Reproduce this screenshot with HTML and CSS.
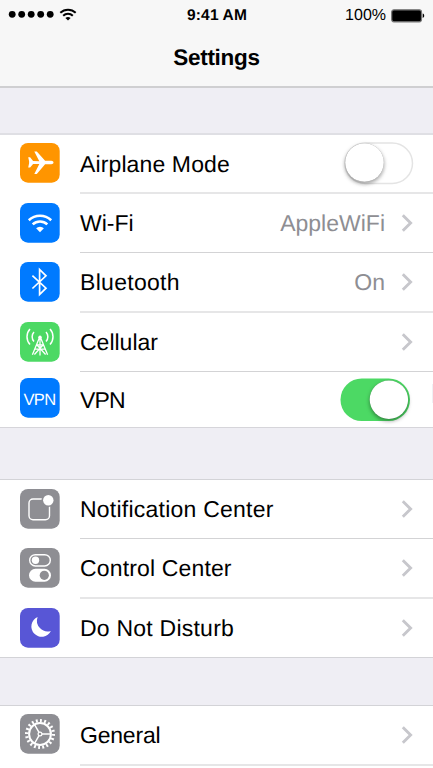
FILE: index.html
```html
<!DOCTYPE html>
<html lang="en">
<head>
<meta charset="utf-8">
<title>Settings</title>
<link rel="stylesheet" href="styles.css">
</head>
<body>
<svg class="defs" width="0" height="0">
  <symbol id="chevron" viewBox="0 0 12 18"><path d="M1.800 1.300 9.600 9 1.800 16.700" fill="none" stroke="#c7c7cc" stroke-width="2.900"/></symbol>
</svg>
<div class="screen">
  <header class="header">
    <div class="status">
      <svg class="signal" width="70" height="18" viewBox="0 0 70 18">
        <circle cx="4.200" cy="8.300" r="3.400"/><circle cx="13.700" cy="8.300" r="3.400"/><circle cx="23.200" cy="8.300" r="3.400"/><circle cx="32.700" cy="8.300" r="3.400"/><circle cx="42.200" cy="8.300" r="3.400"/>
        <g fill="none" stroke="#000" stroke-width="2"><path d="M52.300 6.700a11.200 11.200 0 0 1 15.400 0"/><path d="M55.200 9.800a6.800 6.800 0 0 1 9.600 0"/></g>
        <path d="M57.400 12a4 4 0 0 1 5.200 0L60 14.600z"/>
      </svg>
      <span class="time">9:41 AM</span>
      <span class="power">
        <span class="percent">100%</span>
        <svg width="35" height="14" viewBox="0 0 35 14"><rect x=".7" y=".8" width="29.800" height="12" rx="2.200" fill="#000" stroke="#777" stroke-width="1.200"/><path d="M31.700 4.600c2 .6 2 3.800 0 4.400z"/></svg>
      </span>
    </div>
    <h1 class="title">Settings</h1>
  </header>

  <section class="group group-connect">
    <div class="row">
      <svg class="icon" viewBox="0 0 40 40"><rect width="39.700" height="39.700" rx="8" fill="#ff9500"/><path fill="#fff" d="M8.200 14.300h1.900l3 3.700 6.200.2-5-9.800h2.500l8.300 9.400h6.200c1.200 0 2.200.8 2.200 1.700s-1 1.700-2.200 1.700h-6.200l-8.300 9.700h-2.500l5-9.800-6.200-.2-3 3.700H8.200l.9-4.300v-2z"/></svg>
      <div class="body thick"><span class="label airplane">Airplane Mode</span>
        <svg class="switch off" width="100" height="57" viewBox="0 0 100 57">
          <rect x="12" y="8" width="67.500" height="40.500" rx="20.250" fill="#fff" stroke="#e4e4e4" stroke-width="1.500"/>
          <circle class="knob" cx="31.500" cy="27.500" r="19.300"/>
        </svg>
      </div>
    </div>
    <div class="row">
      <svg class="icon" viewBox="0 0 40 40"><rect width="39.700" height="39.700" rx="8" fill="#007aff"/><g fill="none" stroke="#fff" stroke-width="2.600"><path d="M8.800 17.200a16.500 16.500 0 0 1 22.400 0"/><path d="M12.700 21.400a10.800 10.800 0 0 1 14.600 0"/></g><path fill="#fff" d="M16.100 25.300a5.800 5.800 0 0 1 7.800 0L20 29.300z"/></svg>
      <div class="body"><span class="label wifi">Wi-Fi</span><span class="value">AppleWiFi</span><svg class="chevron"><use href="#chevron"/></svg></div>
    </div>
    <div class="row">
      <svg class="icon" viewBox="0 0 40 40"><rect width="39.700" height="39.700" rx="8" fill="#007aff"/><path d="M12.400 13.600 26 26.200l-6.400 6.300V7.500l6.400 6.300L12.400 26.500" fill="none" stroke="#fff" stroke-width="1.700"/></svg>
      <div class="body thick"><span class="label bluetooth">Bluetooth</span><span class="value">On</span><svg class="chevron"><use href="#chevron"/></svg></div>
    </div>
    <div class="row">
      <svg class="icon" viewBox="0 0 40 40"><rect width="39.700" height="39.700" rx="8" fill="#4cd964"/><g fill="none" stroke="#fff" stroke-width="1.500"><path d="M10 7a11.500 11.500 0 0 0 0 15.500M30 7a11.500 11.500 0 0 1 0 15.500M14 10a7 7 0 0 0 0 9.500M26 10a7 7 0 0 1 0 9.500"/><path d="M19.300 16 12.400 32.800M20.700 16l6.900 16.800M20 14v19.500M17 22.800h6M14.800 27.200h10.400M16.800 22.800l8.800 9.700M23.200 22.800l-8.800 9.700" stroke-width="1.300"/></g><circle cx="20" cy="15.300" r="1.700" fill="#fff"/></svg>
      <div class="body"><span class="label cellular">Cellular</span><svg class="chevron"><use href="#chevron"/></svg></div>
    </div>
    <div class="row vpn-row">
      <svg class="icon" viewBox="0 0 40 40"><rect width="39.700" height="39.700" rx="8" fill="#007aff"/><text class="icon-text" x="19.800" y="26.700" textLength="32.500">VPN</text></svg>
      <div class="body last"><span class="label vpn">VPN</span>
        <svg class="switch on" width="100" height="55" viewBox="0 0 100 55">
          <rect x="7.500" y="6.500" width="69.500" height="42.500" rx="21.250" fill="#4cd964"/>
          <circle class="knob" cx="55.900" cy="27.700" r="19.200"/>
        </svg>
      </div>
    </div>
  </section>

  <section class="group group-focus">
    <div class="row">
      <svg class="icon" viewBox="0 0 40 40"><rect width="39.700" height="39.700" rx="8" fill="#8e8e93"/><rect x="9" y="10" width="20.500" height="20.700" rx="4" fill="none" stroke="#fff" stroke-width="1.400"/><circle cx="28.300" cy="11.300" r="6.800" fill="#8e8e93"/><circle cx="28.300" cy="11.300" r="5.200" fill="#fff"/></svg>
      <div class="body"><span class="label notification">Notification Center</span><svg class="chevron"><use href="#chevron"/></svg></div>
    </div>
    <div class="row">
      <svg class="icon" viewBox="0 0 40 40"><rect width="39.700" height="39.700" rx="8" fill="#8e8e93"/><rect x="9.700" y="6.700" width="20.600" height="11.300" rx="5.650" fill="none" stroke="#fff" stroke-width="1.400"/><circle cx="15.500" cy="12.300" r="3.700" fill="#fff"/><rect x="9" y="20.800" width="22" height="12.900" rx="6.450" fill="#fff"/><circle cx="24.300" cy="27.300" r="4.600" fill="#8e8e93"/></svg>
      <div class="body thick"><span class="label control">Control Center</span><svg class="chevron"><use href="#chevron"/></svg></div>
    </div>
    <div class="row">
      <svg class="icon" viewBox="0 0 40 40"><rect width="39.700" height="39.700" rx="8" fill="#5856d6"/><path fill="#fff" d="M17.600 9a10.300 10.300 0 1 0 13.300 14A10.800 10.800 0 0 1 17.600 9z"/></svg>
      <div class="body last"><span class="label disturb">Do Not Disturb</span><svg class="chevron"><use href="#chevron"/></svg></div>
    </div>
  </section>

  <section class="group group-general">
    <div class="row">
      <svg class="icon" viewBox="0 0 40 40"><rect width="39.700" height="39.700" rx="8" fill="#8e8e93"/><g fill="none" stroke="#fff"><circle cx="20" cy="20" r="13.400" stroke-width="3.200" pathLength="200" stroke-dasharray="4.500 5.500"/><circle cx="20" cy="20" r="10.900" stroke-width="2"/><circle cx="20" cy="20" r="1.900" stroke-width="1.200"/><path d="M21.900 20H31M19 18.300l-4.500-7.800M19 21.700l-4.500 7.800" stroke-width="1.500"/></g></svg>
      <div class="body thick"><span class="label general">General</span><svg class="chevron"><use href="#chevron"/></svg></div>
    </div>
  </section>
</div>
</body>
</html>
```
FILE: styles.css
```css
* { box-sizing: border-box; }
body {
  margin: 0;
  background: #efeef4;
  color: #000;
  font-family: "Liberation Sans", Arial, sans-serif;
  text-rendering: geometricPrecision;
}
.defs { position: absolute; }
.screen {
  width: 433px;
  height: 768px;
  overflow: hidden;
  display: flex;
  flex-direction: column;
}
.header {
  height: 88px;
  flex: none;
  background: #f7f7f7;
  border-bottom: 2px solid #cfcfd1;
}
.status {
  height: 30px;
  padding: 2px 7px 0 8px;
  display: grid;
  grid-template-columns: 1fr auto 1fr;
  align-items: center;
}
.signal { margin: -2px 0 0; }
.time { font-size: 15.5px; font-weight: 700; letter-spacing: .15px; }
.power { display: flex; justify-content: flex-end; align-items: center; gap: 5px; }
.percent { font-size: 16px; }
.title {
  margin: 14px 0 0;
  text-align: center;
  font-size: 22.5px;
  line-height: 28px;
  letter-spacing: -.3px;
}
.group { flex: none; background: #fff; }
.group-connect { margin-top: 45px; border-top: 2px solid #dfdfe4; border-bottom: 1px solid #d6d5da; }
.group-focus { margin-top: 51px; border-top: 1px solid #d3d3d7; border-bottom: 1px solid #d3d3d7; }
.group-general { margin-top: 47px; border-top: 1px solid #d3d3d7; height: 63px; }
.row { display: flex; padding-left: 20px; height: 59px; }
.row:has(.thick) { height: 60px; }
.group-connect .row:first-child { height: 59px; }
.icon { width: 40px; height: 40px; margin: 9px 20px 0 0; flex: none; overflow: visible; }
.group-connect .row:first-child .icon,
.group-general .icon { margin-top: 8px; }
.body {
  flex: 1;
  display: flex;
  align-items: center;
  border-bottom: 1px solid #d3d3d5;
  padding-right: 20px;
}
.thick { border-bottom: 2px solid #e6e6e7; }
.last { border-bottom: 0; }
.group .vpn-row { height: 55px; position: relative; }
.vpn-row .icon { margin-top: 6px; }
.vpn-row::after {
  content: "";
  position: absolute;
  right: 0;
  top: 12px;
  width: 1px;
  height: 19px;
  background: #f0f0f4;
}
.group-focus .row:last-child { height: 58px; }
.label { font-size: 23px; line-height: 30px; margin-right: auto; white-space: nowrap; }
.value { font-size: 23px; line-height: 30px; color: #8e8e93; margin-right: 16px; }
.chevron { width: 12px; height: 18px; flex: none; }
.airplane { letter-spacing: .12px; }
.bluetooth { letter-spacing: .3px; }
.vpn { letter-spacing: -.8px; }
.notification { letter-spacing: .23px; }
.control { letter-spacing: .15px; }
.disturb { letter-spacing: .23px; }
.general { letter-spacing: -.2px; }
.switch { margin-right: -20px; flex: none; }
.knob { fill: #fff; filter: drop-shadow(0 2px 2px rgba(0, 0, 0, .3)) drop-shadow(0 0 .5px rgba(0, 0, 0, .4)); }
.icon-text { font-size: 16.5px; fill: #fff; text-anchor: middle; }
```
